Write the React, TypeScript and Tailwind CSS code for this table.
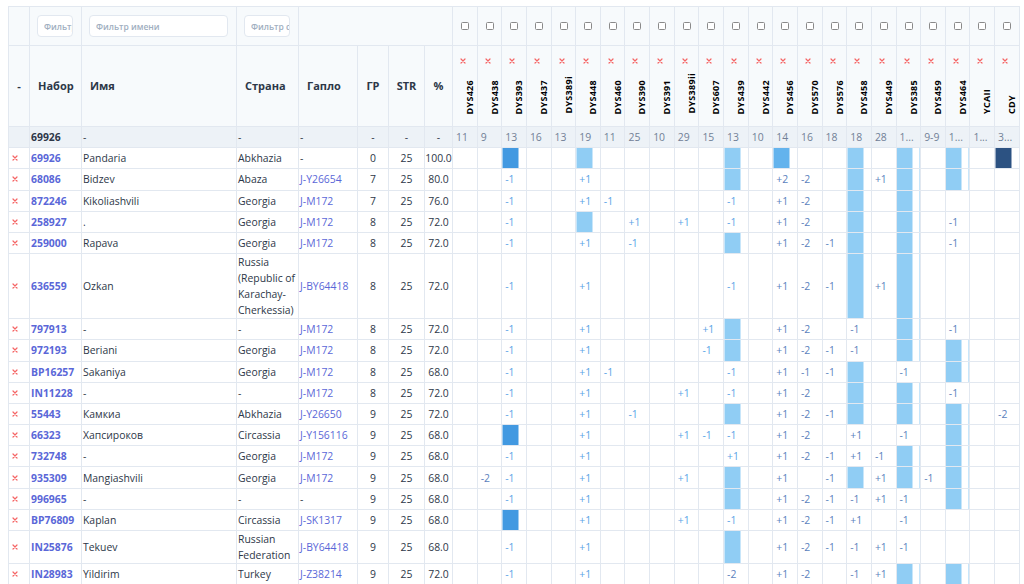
import React from 'react';

const MARKERS = ['DYS426','DYS438','DYS393','DYS437','DYS389i','DYS448','DYS460','DYS390','DYS391','DYS389ii','DYS607','DYS439','DYS442','DYS456','DYS570','DYS576','DYS458','DYS449','DYS385','DYS459','DYS464','YCAII','CDY'];
const SUMMARY = ['11','9','13','16','13','19','11','25','10','29','15','13','10','14','16','18','18','28','1...','9-9','1...','1...','3...'];

const BLOCK: Record<string, string> = {
  b3: 'bg-[linear-gradient(to_right,#90cdf4_16px,transparent_16px)]',
  b4: 'bg-[linear-gradient(to_right,#63b3ed_16px,transparent_16px)]',
  b5: 'bg-[linear-gradient(to_right,#4299e1_16px,transparent_16px)]',
  b8: 'bg-[linear-gradient(to_right,#2c5282_16px,transparent_16px)]',
};

type Row = {
  id: string;
  name: string;
  country: string;
  haplo: string;
  gr: string;
  str: string;
  pct: string;
  m: Record<number, string>;
};

const ROWS: Row[] = [
  { id: '69926', name: 'Pandaria', country: 'Abkhazia', haplo: '-', gr: '0', str: '25', pct: '100.0', m: { 2: 'b5', 5: 'b3', 11: 'b3', 13: 'b4', 16: 'b3', 18: 'b3', 20: 'b3', 22: 'b8' } },
  { id: '68086', name: 'Bidzev', country: 'Abaza', haplo: 'J-Y26654', gr: '7', str: '25', pct: '80.0', m: { 2: '-1', 5: '+1', 11: 'b3', 13: '+2', 14: '-2', 16: 'b3', 17: '+1', 18: 'b3', 20: 'b3' } },
  { id: '872246', name: 'Kikoliashvili', country: 'Georgia', haplo: 'J-M172', gr: '7', str: '25', pct: '76.0', m: { 2: '-1', 5: '+1', 6: '-1', 11: '-1', 13: '+1', 14: '-2', 16: 'b3', 18: 'b3' } },
  { id: '258927', name: '.', country: 'Georgia', haplo: 'J-M172', gr: '8', str: '25', pct: '72.0', m: { 2: '-1', 5: 'b3', 7: '+1', 9: '+1', 11: '-1', 13: '+1', 14: '-2', 16: 'b3', 18: 'b3', 20: '-1' } },
  { id: '259000', name: 'Rapava', country: 'Georgia', haplo: 'J-M172', gr: '8', str: '25', pct: '72.0', m: { 2: '-1', 5: '+1', 7: '-1', 11: 'b3', 13: '+1', 14: '-2', 15: '-1', 16: 'b3', 18: 'b3', 20: '-1' } },
  { id: '636559', name: 'Ozkan', country: 'Russia (Republic of Karachay-Cherkessia)', haplo: 'J-BY64418', gr: '8', str: '25', pct: '72.0', m: { 2: '-1', 5: '+1', 11: '-1', 13: '+1', 14: '-2', 15: '-1', 16: 'b3', 17: '+1', 18: 'b3' } },
  { id: '797913', name: '-', country: '-', haplo: 'J-M172', gr: '8', str: '25', pct: '72.0', m: { 2: '-1', 5: '+1', 10: '+1', 11: 'b3', 13: '+1', 14: '-2', 16: '-1', 18: 'b3', 20: '-1' } },
  { id: '972193', name: 'Beriani', country: 'Georgia', haplo: 'J-M172', gr: '8', str: '25', pct: '72.0', m: { 2: '-1', 5: '+1', 10: '-1', 11: 'b3', 13: '+1', 14: '-2', 15: '-1', 16: '-1', 18: 'b3', 20: 'b3' } },
  { id: 'BP16257', name: 'Sakaniya', country: 'Georgia', haplo: 'J-M172', gr: '8', str: '25', pct: '68.0', m: { 2: '-1', 5: '+1', 6: '-1', 11: '-1', 13: '+1', 14: '-1', 15: '-1', 16: 'b3', 18: '-1', 20: 'b3' } },
  { id: 'IN11228', name: '-', country: '-', haplo: 'J-M172', gr: '8', str: '25', pct: '72.0', m: { 2: '-1', 5: '+1', 9: '+1', 11: '-1', 13: '+1', 14: '-2', 16: 'b3', 18: 'b3', 20: '-1' } },
  { id: '55443', name: 'Камкиа', country: 'Abkhazia', haplo: 'J-Y26650', gr: '9', str: '25', pct: '72.0', m: { 2: '-1', 5: '+1', 7: '-1', 11: 'b3', 13: '+1', 14: '-2', 15: '-1', 16: 'b3', 18: 'b3', 20: 'b3', 22: '-2' } },
  { id: '66323', name: 'Хапсироков', country: 'Circassia', haplo: 'J-Y156116', gr: '9', str: '25', pct: '68.0', m: { 2: 'b5', 5: '+1', 9: '+1', 10: '-1', 11: '-1', 13: '+1', 14: '-2', 16: '+1', 18: '-1', 20: 'b3' } },
  { id: '732748', name: '-', country: 'Georgia', haplo: 'J-M172', gr: '9', str: '25', pct: '68.0', m: { 2: '-1', 5: '+1', 11: '+1', 13: '+1', 14: '-2', 15: '-1', 16: '+1', 17: '-1', 18: 'b3', 20: 'b3' } },
  { id: '935309', name: 'Mangiashvili', country: 'Georgia', haplo: 'J-M172', gr: '9', str: '25', pct: '68.0', m: { 1: '-2', 2: '-1', 5: '+1', 9: '+1', 11: 'b3', 13: '+1', 15: '-1', 16: 'b3', 17: '+1', 18: 'b3', 19: '-1', 20: 'b3' } },
  { id: '996965', name: '-', country: '-', haplo: '-', gr: '9', str: '25', pct: '68.0', m: { 2: '-1', 5: '+1', 11: 'b3', 13: '+1', 14: '-2', 15: '-1', 16: '-1', 17: '+1', 18: '-1', 20: 'b3' } },
  { id: 'BP76809', name: 'Kaplan', country: 'Circassia', haplo: 'J-SK1317', gr: '9', str: '25', pct: '68.0', m: { 2: 'b5', 5: '+1', 9: '+1', 11: '-1', 13: '+1', 14: '-2', 15: '-1', 16: '+1', 18: '-1' } },
  { id: 'IN25876', name: 'Tekuev', country: 'Russian Federation', haplo: 'J-BY64418', gr: '9', str: '25', pct: '68.0', m: { 2: '-1', 5: '+1', 11: 'b3', 13: '+1', 14: '-2', 15: '-1', 16: '-1', 17: '+1', 18: '-1' } },
  { id: 'IN28983', name: 'Yildirim', country: 'Turkey', haplo: 'J-Z38214', gr: '9', str: '25', pct: '72.0', m: { 2: '-1', 5: '+1', 11: '-2', 13: '+1', 14: '-2', 16: '-1', 17: '+1', 18: 'b3', 20: 'b3' } },
];

const B = 'border border-[#e2e8f0]';

function Cross({ className = '' }: { className?: string }) {
  return (
    <svg width="6" height="6" viewBox="0 0 6 6" className={className}>
      <path d="M1 1L5 5M5 1L1 5" stroke="#f56565" strokeWidth="1.2" strokeLinecap="round" />
    </svg>
  );
}

function numColor(i: number, v: string) {
  return i >= 12 || v.includes('2') ? 'text-[#5b7fbd]' : 'text-[#5aa3e6]';
}

export default function App() {
  return (
    <div className="w-[1024px] h-[584px] overflow-hidden bg-white pt-[6px] pl-[8px] font-['Open_Sans',sans-serif] text-[10.4px] text-[#2d3748]">
      <table className="table-fixed border-collapse w-[1011px]">
        <colgroup>
          <col className="w-[21px]" />
          <col className="w-[52px]" />
          <col className="w-[155px]" />
          <col className="w-[62px]" />
          <col className="w-[59px]" />
          <col className="w-[31px]" />
          <col className="w-[36px]" />
          <col className="w-[28px]" />
          {MARKERS.map((m) => (
            <col key={m} className="w-[24.65px]" />
          ))}
        </colgroup>
        <thead>
          <tr className="h-[39px] bg-[#f7fafc]">
            <th className={B}></th>
            <th className={`${B} text-left`}>
              <input readOnly placeholder="Фильтр набора" className="ml-[7px] w-[36px] h-[22px] rounded-[4px] border border-[#e2e8f0] bg-white pl-[6px] text-[8.5px] font-semibold outline-none placeholder:text-[#a0aec0]" />
            </th>
            <th className={`${B} text-left`}>
              <input readOnly placeholder="Фильтр имени" className="ml-[7px] w-[139px] h-[22px] rounded-[4px] border border-[#e2e8f0] bg-white pl-[6px] text-[8.5px] font-semibold outline-none placeholder:text-[#a0aec0]" />
            </th>
            <th className={`${B} text-left`}>
              <input readOnly placeholder="Фильтр страны" className="ml-[7px] w-[46px] h-[22px] rounded-[4px] border border-[#e2e8f0] bg-white pl-[6px] text-[8.5px] font-semibold outline-none placeholder:text-[#a0aec0]" />
            </th>
            <th className={B} colSpan={4}></th>
            {MARKERS.map((m) => (
              <th key={m} className={B}>
                <div className="ml-[8px] w-[8px] h-[8px] rounded-[1.5px] border border-[#8a8a8a] bg-white"></div>
              </th>
            ))}
          </tr>
          <tr className="h-[81px] bg-[#f7fafc] text-[11px] font-bold">
            <th className={`${B} text-center`}>-</th>
            <th className={`${B} text-left pl-[8px]`}>Набор</th>
            <th className={`${B} text-left pl-[8px]`}>Имя</th>
            <th className={`${B} text-left pl-[8px]`}>Страна</th>
            <th className={`${B} text-left pl-[8px]`}>Гапло</th>
            <th className={`${B} text-center`}>ГР</th>
            <th className={`${B} text-center`}>STR</th>
            <th className={`${B} text-center`}>%</th>
            {MARKERS.map((m) => (
              <th key={m} className={`${B} p-0 align-top`}>
                <div className="h-[80px] flex flex-col items-start justify-between pt-[12px] pb-[12px]">
                  <Cross className="ml-[7px]" />
                  <span className="ml-[12px] [writing-mode:vertical-rl] rotate-180 text-[9px] leading-[9px] font-bold text-black tracking-[0.3px] whitespace-nowrap">
                    {m}
                  </span>
                </div>
              </th>
            ))}
          </tr>
        </thead>
        <tbody className="leading-[16px]">
          <tr className="h-[21.2px] bg-[#edf2f7]">
            <td className={B}></td>
            <td className={`${B} pl-[1px] font-bold`}>69926</td>
            <td className={`${B} pl-[1px]`}>-</td>
            <td className={`${B} pl-[1px]`}>-</td>
            <td className={`${B} pl-[1px]`}>-</td>
            <td className={`${B} text-center`}>-</td>
            <td className={`${B} text-center`}>-</td>
            <td className={`${B} text-center`}>-</td>
            {SUMMARY.map((s, i) => (
              <td key={i} className={`${B} pl-[3px] pr-0 text-[#718096] whitespace-nowrap`}>
                {s}
              </td>
            ))}
          </tr>
          {ROWS.map((r) => (
            <tr key={r.id} className="h-[21.2px] bg-white">
              <td className={`${B} pl-[3px]`}>
                <Cross />
              </td>
              <td className={`${B} pl-[1px] font-bold text-[#5a67d8]`}>{r.id}</td>
              <td className={`${B} pl-[1px]`}>{r.name}</td>
              <td className={`${B} pl-[1px]`}>{r.country}</td>
              <td className={`${B} pl-[1px] ${r.haplo === '-' ? '' : 'text-[#5a67d8]'}`}>{r.haplo}</td>
              <td className={`${B} text-center`}>{r.gr}</td>
              <td className={`${B} text-center`}>{r.str}</td>
              <td className={`${B} text-center`}>{r.pct}</td>
              {MARKERS.map((_, i) => {
                const v = r.m[i];
                if (!v) return <td key={i} className={B}></td>;
                if (BLOCK[v]) return <td key={i} className={`${B} ${BLOCK[v]}`}></td>;
                return (
                  <td key={i} className={`${B} pl-[3px] whitespace-nowrap ${numColor(i, v)}`}>
                    {v}
                  </td>
                );
              })}
            </tr>
          ))}
        </tbody>
      </table>
    </div>
  );
}
